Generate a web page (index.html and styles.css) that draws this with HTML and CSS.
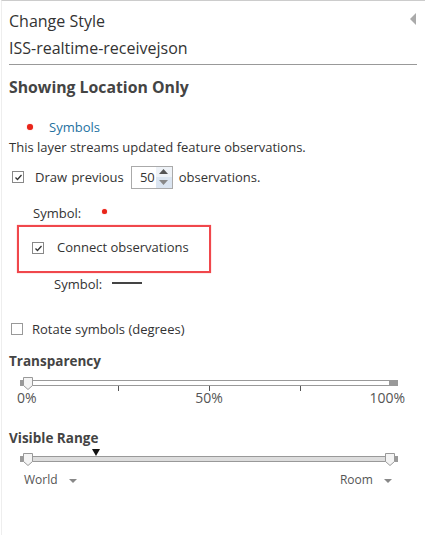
FILE: index.html
```html
<!DOCTYPE html>
<html>
<head>
<meta charset="utf-8">
<link rel="stylesheet" href="styles.css">
</head>
<body>
<div class="panel">
  <div class="header">
    <div class="title">Change Style</div>
    <svg class="collapse" width="6" height="12" viewBox="0 0 6 12"><path d="M6 0 L0 6 L6 12 Z" fill="#aaa"/></svg>
  </div>
  <div class="layer">ISS-realtime-receivejson</div>
  <div class="rule"></div>
  <div class="section-title main">Showing Location Only</div>

  <div class="symbols-row">
    <span class="dot"></span>
    <span class="link">Symbols</span>
  </div>
  <div class="desc">This layer streams updated feature observations.</div>

  <div class="draw-row">
    <span class="cb"><svg viewBox="0 0 11 11" width="11" height="11"><path d="M2.5 5.5 L4.5 7.5 L8.5 3" stroke="#333" stroke-width="1.3" fill="none"/></svg></span>
    <span class="draw-label">Draw previous</span>
    <span class="spinner">
      <span class="spin-val">50</span>
      <span class="spin-btns">
        <span class="spin-up"><svg width="9" height="5" viewBox="0 0 9 5"><path d="M0 5 L4.5 0 L9 5Z" fill="#555"/></svg></span>
        <span class="spin-down"><svg width="9" height="5" viewBox="0 0 9 5"><path d="M0 0 L4.5 5 L9 0Z" fill="#888"/></svg></span>
      </span>
    </span>
    <span class="draw-after">observations.</span>
  </div>

  <div class="sym-row1">
    <span>Symbol:</span>
    <span class="dot small"></span>
  </div>

  <div class="highlight">
    <span class="cb"><svg viewBox="0 0 11 11" width="11" height="11"><path d="M2.5 5.5 L4.5 7.5 L8.5 3" stroke="#333" stroke-width="1.3" fill="none"/></svg></span>
    <span class="connect-label">Connect observations</span>
  </div>

  <div class="sym-row2">
    <span>Symbol:</span>
    <span class="line-sym"></span>
  </div>

  <div class="rotate-row">
    <span class="cb"></span>
    <span>Rotate symbols (degrees)</span>
  </div>

  <div class="section-title trans">Transparency</div>
  <div class="slider">
    <div class="track">
      <span class="end left"></span>
      <span class="bar white"></span>
      <span class="end right"></span>
      <span class="thumb" style="left:3px"><svg width="10" height="13" viewBox="0 0 10 13"><path d="M0.5 0.5 H9.5 V8.5 L5 12.5 L0.5 8.5 Z" fill="#f4f4f4" stroke="#999"/></svg></span>
      <span class="tick" style="left:98px"></span>
      <span class="tick" style="left:189px"></span>
      <span class="tick" style="left:280px"></span>
    </div>
    <div class="tick-labels">
      <span class="tl-start">0%</span>
      <span class="tl-mid">50%</span>
      <span class="tl-end">100%</span>
    </div>
  </div>

  <div class="section-title range">Visible Range</div>
  <div class="slider range-slider">
    <span class="marker" style="left:72px"><svg width="8" height="7" viewBox="0 0 8 7"><path d="M0 0 H8 L4 7 Z" fill="#111"/></svg></span>
    <div class="track">
      <span class="end left"></span>
      <span class="bar gray"></span>
      <span class="end right"></span>
      <span class="thumb" style="left:3px"><svg width="10" height="13" viewBox="0 0 10 13"><path d="M0.5 0.5 H9.5 V8.5 L5 12.5 L0.5 8.5 Z" fill="#f4f4f4" stroke="#999"/></svg></span>
      <span class="thumb" style="left:365px"><svg width="10" height="13" viewBox="0 0 10 13"><path d="M0.5 0.5 H9.5 V8.5 L5 12.5 L0.5 8.5 Z" fill="#f4f4f4" stroke="#999"/></svg></span>
    </div>
    <div class="range-labels">
      <span class="dd">World <svg width="8" height="4" viewBox="0 0 8 4"><path d="M0 0 H8 L4 4Z" fill="#888"/></svg></span>
      <span class="dd">Room <svg width="8" height="4" viewBox="0 0 8 4"><path d="M0 0 H8 L4 4Z" fill="#888"/></svg></span>
    </div>
  </div>
</div>
</body>
</html>
```

FILE: styles.css
```css
html, body {
  margin: 0;
  padding: 0;
  background: #fff;
}
body {
  font-family: "Open Sans", "Liberation Sans", sans-serif;
  color: #333;
  font-size: 13px;
}
.panel {
  width: 424px;
  height: 535px;
  border-top: 1px solid #ccc;
  border-left: 1px solid #eee;
  margin-left: 1px;
  box-sizing: border-box;
  padding: 0 7px 0 7px;
}
.header {
  display: flex;
  justify-content: space-between;
  align-items: flex-start;
  padding-top: 10px;
}
.title {
  font-size: 16px;
  line-height: 20px;
}
.collapse {
  margin-top: 2px;
  margin-right: 2px;
}
.layer {
  font-size: 16px;
  line-height: 20px;
  margin-top: 7px;
}
.rule {
  height: 1px;
  background: #999;
  margin-top: 6px;
  margin-right: 1px;
}
.section-title {
  font-weight: bold;
  font-size: 13.5px;
  line-height: 18px;
  color: #444;
}
.section-title.main {
  font-size: 15.8px;
  margin-top: 13px;
}
.symbols-row {
  display: flex;
  align-items: center;
  margin-top: 22px;
  height: 18px;
}
.dot {
  width: 6px;
  height: 6px;
  border-radius: 50%;
  background: #e8261a;
  margin-left: 18px;
  box-shadow: 0 0 1px #f66;
}
.dot.small {
  width: 5px;
  height: 5px;
  margin-left: 21px;
  margin-top: -4px;
}
.link {
  color: #24719f;
  margin-left: 16px;
}
.desc {
  margin-top: 2px;
  line-height: 18px;
}
.draw-row {
  display: flex;
  align-items: center;
  margin-top: 10px;
  height: 22px;
}
.cb {
  width: 12px;
  height: 12px;
  border: 1px solid #888;
  box-sizing: border-box;
  background: #fff;
  display: inline-flex;
  align-items: center;
  justify-content: center;
  flex: none;
}
.cb svg {
  display: block;
  flex: none;
}
.draw-row .cb {
  margin-left: 3px;
}
.draw-label {
  margin-left: 11px;
  word-spacing: 1px;
}
.spinner {
  margin-left: 7px;
  width: 42px;
  height: 23px;
  border: 1px solid #aaa;
  box-sizing: border-box;
  display: flex;
}
.spin-val {
  flex: 1;
  text-align: right;
  padding-right: 1px;
  line-height: 20px;
}
.spin-btns {
  width: 16px;
  display: flex;
  flex-direction: column;
}
.spin-up, .spin-down {
  flex: 1;
  display: flex;
  align-items: center;
  justify-content: center;
  background: #eef2f7;
}
.spin-down {
  background: #dbe5f1;
}
.draw-after {
  margin-left: 6px;
}
.sym-row1 {
  display: flex;
  align-items: center;
  margin-top: 17px;
  padding-left: 24px;
  line-height: 16px;
}
.highlight {
  margin-top: 4px;
  margin-left: 8px;
  width: 194px;
  height: 48px;
  border: 2px solid #f0474c;
  box-sizing: border-box;
  display: flex;
  align-items: center;
  padding-left: 13px;
  box-shadow: 0 0 1px #f88;
}
.highlight .cb {
  margin-top: -2px;
}
.connect-label {
  margin-left: 13px;
  margin-top: -4px;
}
.sym-row2 {
  display: flex;
  align-items: center;
  margin-top: 3px;
  padding-left: 45px;
  line-height: 16px;
}
.line-sym {
  width: 30px;
  height: 2px;
  background: #444;
  margin-left: 10px;
  margin-top: -2px;
}
.rotate-row {
  display: flex;
  align-items: center;
  margin-top: 29px;
  line-height: 16px;
}
.rotate-row .cb {
  margin-left: 2px;
  margin-right: 9px;
  border-color: #999;
}
.section-title.trans {
  margin-top: 15px;
}
.slider {
  position: relative;
  margin-left: 11px;
  width: 378px;
}
.track {
  position: relative;
  height: 6px;
  display: flex;
  margin-top: 10px;
}
.end {
  width: 7px;
  height: 6px;
  background: #999;
  flex: none;
}
.end.right {
  width: 8px;
}
.bar {
  flex: 1;
  border: 1px solid #999;
  box-sizing: border-box;
  height: 6px;
}
.bar.white {
  background: #fff;
}
.bar.gray {
  background: #ddd;
}
.thumb {
  position: absolute;
  top: -3px;
  line-height: 0;
}
.tick {
  position: absolute;
  top: 6px;
  width: 1px;
  height: 5px;
  background: #555;
}
.tick-labels {
  display: grid;
  grid-template-columns: 1fr auto 1fr;
  margin-top: 4px;
  margin-left: -3px;
  margin-right: -7px;
  line-height: 16px;
  font-size: 14px;
  color: #555;
}
.tl-start {
  justify-self: start;
}
.tl-mid {
  margin-left: -4px;
}
.tl-end {
  justify-self: end;
}
.section-title.range {
  margin-top: 23px;
}
.range-slider .track {
  margin-top: 9px;
}
.marker {
  position: absolute;
  top: -7px;
  line-height: 0;
}
.range-labels {
  display: flex;
  justify-content: space-between;
  margin-top: 10px;
  padding-left: 4px;
  padding-right: 6px;
  line-height: 16px;
  font-size: 12px;
  color: #555;
}
.dd svg {
  margin-left: 8px;
  vertical-align: middle;
}
```
